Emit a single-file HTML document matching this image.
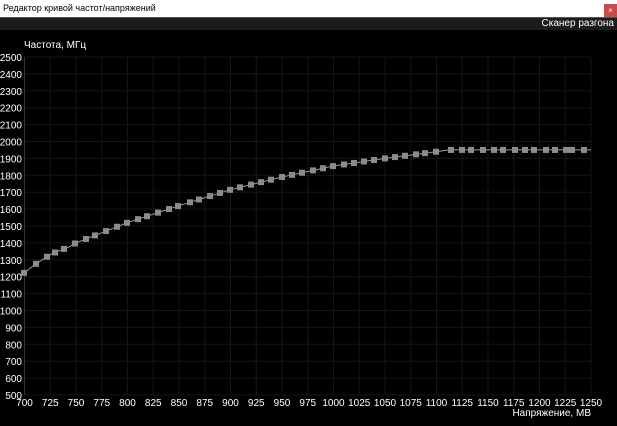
<!DOCTYPE html>
<html><head><meta charset="utf-8"><style>
body{margin:0;width:617px;height:426px;background:#000;overflow:hidden;font-family:"Liberation Sans",sans-serif;position:relative}
.title{position:absolute;left:0;top:0;width:617px;height:17px;background:#fff;border-bottom:1px solid #555;}
.title span{position:absolute;left:3px;top:3px;font-size:9px;color:#000}
.close{position:absolute;right:0;top:4px;width:13px;height:13px;background:#c84b4b;color:#fff;font-size:8px;text-align:center;line-height:13px}
.bar{position:absolute;left:0;top:18px;width:617px;height:12px;background:#1c1c1c}
.bar span{position:absolute;right:3px;top:0px;font-size:10px;color:#fff}
svg{position:absolute;left:0;top:0}
svg text{font-family:"Liberation Sans",sans-serif;font-size:10px;fill:#fff}
</style></head><body>
<div class="title"><span>Редактор кривой частот/напряжений</span><div class="close">×</div></div>
<div class="bar"><span>Сканер разгона</span></div>
<svg id="s" width="617" height="426"></svg>
<script>
var s=document.getElementById('s'),h='';
function X(v){return 24.5+(v-700)*566.5/550}
function Y(f){return 57+(2500-f)*0.169}
for(var v=700;v<=1250;v+=25){var x=X(v);h+='<line x1="'+x+'" y1="57" x2="'+x+'" y2="395" stroke="#161616"/>';h+='<text x="'+x+'" y="406" text-anchor="middle">'+v+'</text>';}
for(var f=500;f<=2500;f+=100){var y=Y(f);h+='<line x1="24.5" y1="'+y+'" x2="591" y2="'+y+'" stroke="#161616"/>';h+='<text x="22" y="'+(y+4)+'" text-anchor="end">'+f+'</text>';}
h+='<line x1="24.5" y1="57" x2="24.5" y2="395" stroke="#333"/>';
h+='<text x="24" y="48">Частота, МГц</text>';
h+='<text x="591" y="416" text-anchor="end">Напряжение, МВ</text>';
var kv=[700,712,725,732,743,750,800,850,900,950,1000,1050,1100,1112,1250],kf=[1225,1280,1330,1350,1375,1400,1520,1620,1715,1790,1855,1900,1940,1950,1950];
function F(v){for(var i=0;i<kv.length-1;i++){if(v<=kv[i+1]){var t=(v-kv[i])/(kv[i+1]-kv[i]);return kf[i]+t*(kf[i+1]-kf[i]);}}return 1950}
var pts=[];for(var v=700;v<=1250;v+=2)pts.push(X(v).toFixed(1)+','+Y(F(v)).toFixed(1));
h+='<polyline points="'+pts.join(' ')+'" fill="none" stroke="#999" stroke-width="1"/>';
var px=[24,36,47,55,64,75,86,95,106,117,127,138,147,158,169,178,190,199,210,220,230,240,251,261,271,282,292,302,313,323,333,344,354,364,374,385,395,405,416,425,436,451,462,471,483,494,503,515,525,534,546,555,566,572,584];
px.forEach(function(x){var v=700+(x-24.5)*550/566.5;var y=Y(F(v));h+='<rect x="'+(x-3)+'" y="'+(y-3)+'" width="6" height="6" fill="#8c8c8c"/>';});
s.innerHTML=h;
</script>
</body></html>
